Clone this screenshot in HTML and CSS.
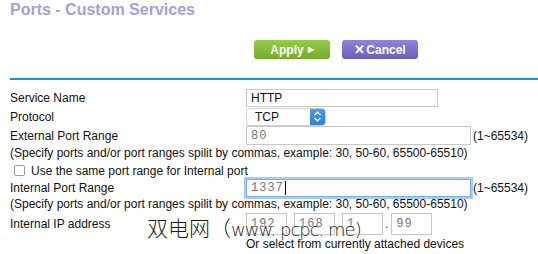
FILE: index.html
```html
<!DOCTYPE html>
<html lang="en">
<head>
    <meta charset="UTF-8">
    <meta name="viewport" content="width=device-width, initial-scale=1.0">
    <title>Ports - Custom Services</title>
    <link rel="stylesheet" href="styles.css">
</head>
<body>
    <h1 class="title">Ports - Custom Services</h1>

    <div class="actions">
        <button class="btn apply">Apply <span class="tri">&#9654;</span></button>
        <button class="btn cancel"><span class="x">&#10005;</span>Cancel</button>
    </div>

    <div class="rule"></div>

    <div class="form">
        <div class="row r-name">
            <label>Service Name</label>
            <input class="txt wide" type="text" value="HTTP">
        </div>
        <div class="row r-proto">
            <label>Protocol</label>
            <div class="select">
                <span>TCP</span>
                <span class="arrows">
                    <svg width="9" height="11" viewBox="0 0 9 11"><path d="M1.5 4 L4.5 1.3 L7.5 4 M1.5 7 L4.5 9.7 L7.5 7" fill="none" stroke="#fff" stroke-width="1.4"/></svg>
                </span>
            </div>
        </div>
        <div class="row r-ext">
            <label>External Port Range</label>
            <div class="withrange">
                <input class="txt mono port" type="text" value="80">
                <span class="range">(1~65534)</span>
            </div>
        </div>
        <div class="note n1">(Specify ports and/or port ranges spilit by commas, example: 30, 50-60, 65500-65510)</div>
        <div class="check">
            <span class="box"></span>
            <span>Use the same port range for Internal port</span>
        </div>
        <div class="row r-int">
            <label>Internal Port Range</label>
            <div class="withrange">
                <div class="txt mono port focus">1337<span class="caret"></span></div>
                <span class="range">(1~65534)</span>
            </div>
        </div>
        <div class="note n2">(Specify ports and/or port ranges spilit by commas, example: 30, 50-60, 65500-65510)</div>
        <div class="row r-ip">
            <label>Internal IP address</label>
            <div class="ip">
                <input class="txt mono oct" type="text" value="192">
                <input class="txt mono oct" type="text" value="168">
                <input class="txt mono oct" type="text" value="1">
                <span class="dot">.</span>
                <input class="txt mono oct" type="text" value="99">
            </div>
        </div>
        <div class="row r-or">
            <span></span>
            <span>Or select from currently attached devices</span>
        </div>

        <div class="watermark">双电网（<span class="latin">www. pcpc. me)</span></div>
    </div>
</body>
</html>
```

FILE: styles.css
```css
body {
    margin: 0;
    font-family: "Liberation Sans", Arial, sans-serif;
    font-size: 12px;
    color: #111;
    background: #fff;
    width: 538px;
    height: 254px;
    overflow: hidden;
}
.title {
    margin: 0;
    padding: 0 10px;
    height: 20px;
    line-height: 20px;
    font-size: 16px;
    font-weight: bold;
    color: #a69fd9;
}
.actions {
    display: flex;
    gap: 12px;
    padding-left: 254px;
    margin-top: 20px;
    height: 19px;
}
.btn {
    width: 76px;
    height: 19px;
    border: none;
    border-radius: 3px;
    color: #fff;
    font-family: "Liberation Sans", Arial, sans-serif;
    font-size: 12px;
    font-weight: bold;
    padding: 0;
    display: flex;
    align-items: center;
    justify-content: center;
}
.apply {
    background: linear-gradient(#95cb47, #74ad2b);
}
.apply .tri {
    font-size: 8px;
    margin-left: 4px;
}
.cancel {
    background: linear-gradient(#8e84dc, #6c60b9);
}
.cancel .x {
    font-size: 13px;
    margin-right: 1px;
}
.rule {
    margin: 19px 0 0 10px;
    height: 2px;
    background: #0d98cd;
}
.form {
    position: relative;
    padding: 8px 0 0 10px;
}
.row {
    display: grid;
    grid-template-columns: 236px 1fr;
    align-items: center;
    height: 19px;
}
.row label {
    line-height: 14px;
}
.txt {
    box-sizing: border-box;
    border: 1px solid #c8c8c8;
    margin: 0;
    padding: 0 4px;
    font-family: "Liberation Sans", Arial, sans-serif;
    font-size: 12px;
    color: #111;
    background: #fff;
    outline: none;
}
.wide {
    width: 192px;
    height: 18px;
}
.select {
    box-sizing: border-box;
    width: 80px;
    height: 18px;
    border: 1px solid #d0d0d0;
    border-radius: 4px;
    display: flex;
    align-items: center;
    justify-content: space-between;
    padding-left: 8px;
    overflow: hidden;
    box-shadow: 0 1px 1px rgba(0, 0, 0, 0.12);
}
.arrows {
    width: 15px;
    height: 18px;
    background: linear-gradient(#4c9cf5, #2a7ee8);
    display: flex;
    align-items: center;
    justify-content: center;
}
.withrange {
    display: flex;
    align-items: center;
    gap: 2px;
}
.mono {
    font-family: "Liberation Mono", "Courier New", monospace;
    color: #777;
    letter-spacing: 1px;
}
.port {
    width: 225px;
    height: 19px;
}
.note {
    height: 17px;
    line-height: 17px;
}
.n2 {
    height: 16px;
    line-height: 14px;
}
.check {
    display: flex;
    align-items: center;
    height: 17px;
    padding-left: 4px;
    gap: 6px;
}
.box {
    box-sizing: border-box;
    width: 11px;
    height: 11px;
    border: 1px solid #999;
    border-radius: 2px;
    background: #fff;
}
.r-int {
    height: 18px;
}
.focus {
    display: flex;
    align-items: center;
    border-color: #79aee8;
    box-shadow: 0 0 0 2px #a8cdf5;
    height: 18px;
}
.caret {
    display: inline-block;
    width: 1px;
    height: 14px;
    background: #000;
    margin-left: 1px;
}
.r-ip {
    height: 22px;
}
.ip {
    display: flex;
    align-items: center;
    gap: 7px;
}
.oct {
    width: 41px;
    height: 22px;
}
.dot {
    margin: 0 -4px 0 -5px;
    color: #333;
}
.r-or {
    height: 17px;
}
.watermark {
    position: absolute;
    left: 147px;
    top: 132px;
    font-family: "Noto Sans CJK SC", sans-serif;
    font-size: 21px;
    font-weight: 300;
    color: #1a1a1a;
    white-space: nowrap;
    text-shadow: 0 0 2px #fff, 0 0 2px #fff;
}
.watermark .latin {
    font-family: "DejaVu Sans", sans-serif;
    font-size: 18px;
    letter-spacing: -1px;
}
```
